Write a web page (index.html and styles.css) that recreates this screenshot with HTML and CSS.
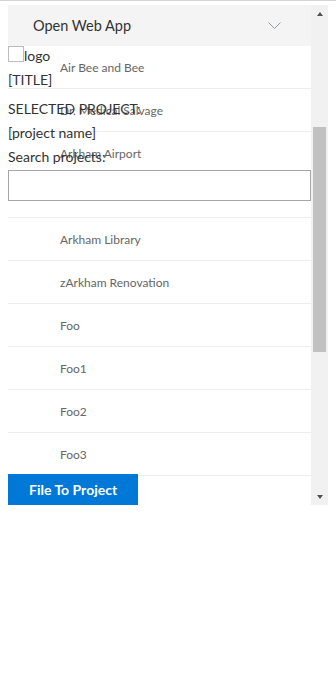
FILE: index.html
```html
<!DOCTYPE html>
<html lang="en">
<head>
    <meta charset="UTF-8">
    <meta name="viewport" content="width=device-width, initial-scale=1.0">
    <title>File To Project</title>
    <link rel="stylesheet" href="styles.css">
</head>
<body>
    <div class="page">
        <div class="pane">
            <div class="pane-content">
                <div class="app-header">
                    <span>Open Web App</span>
                    <svg class="chevron" width="13" height="7" viewBox="0 0 13 7">
                        <polyline points="0.5,0.5 6.5,6.5 12.5,0.5" fill="none" stroke="#8a9ab0" stroke-width="1"/>
                    </svg>
                </div>
                <ul class="project-list">
                    <li>Air Bee and Bee</li>
                    <li>Dr. Medical Salvage</li>
                    <li>Arkham Airport</li>
                    <li></li>
                    <li>Arkham Library</li>
                    <li>zArkham Renovation</li>
                    <li>Foo</li>
                    <li>Foo1</li>
                    <li>Foo2</li>
                    <li>Foo3</li>
                </ul>
            </div>
            <div class="scrollbar">
                <div class="sb-btn"><span class="arrow-up"></span></div>
                <div class="sb-track"><div class="sb-thumb"></div></div>
                <div class="sb-btn"><span class="arrow-down"></span></div>
            </div>
        </div>

        <div class="overlay">
            <div class="line"><span class="broken-img"></span>logo</div>
            <div class="line">[TITLE]</div>
            <div class="line selected">SELECTED PROJECT:</div>
            <div class="line">[project name]</div>
            <label class="line" for="search">Search projects:</label>
            <input id="search" class="search" type="text">
            <button class="file-btn">File To Project</button>
        </div>

        <svg class="cursor" width="13" height="20" viewBox="0 0 13 20">
            <path d="M0.5,0.5 L0.5,16.5 L4.5,12.8 L7.2,19 L9.6,18 L7,11.8 L12,11.8 Z" fill="#fff" stroke="#000" stroke-width="1" stroke-linejoin="miter"/>
        </svg>
    </div>
</body>
</html>
```

FILE: styles.css
```css
body {
    margin: 0;
    padding: 0;
    background-color: #fff;
    border-top: 1px solid #d4d4d4;
    font-family: Lato, "Liberation Sans", sans-serif;
}

.page {
    position: relative;
    padding: 4px 8px 0 8px;
}

/* panel with the project list */
.pane {
    display: flex;
    width: 320px;
    height: 500px;
}

.pane-content {
    flex: 1;
    overflow: hidden;
}

.app-header {
    display: flex;
    align-items: center;
    justify-content: space-between;
    height: 41px;
    padding: 0 30px 0 25px;
    background-color: #f4f4f4;
    color: #333;
    font-size: 14.5px;
}

.chevron {
    display: block;
}

.project-list {
    list-style: none;
    margin: 0;
    padding: 0;
}

.project-list li {
    display: flex;
    align-items: center;
    height: 42px;
    padding-left: 52px;
    border-bottom: 1px solid #eee;
    color: #666;
    font-size: 12px;
}

/* classic scrollbar */
.scrollbar {
    display: flex;
    flex-direction: column;
    width: 17px;
    background-color: #f1f1f1;
}

.sb-btn {
    display: flex;
    align-items: center;
    justify-content: center;
    height: 17px;
}

.arrow-up {
    width: 0;
    height: 0;
    border-left: 3.5px solid transparent;
    border-right: 3.5px solid transparent;
    border-bottom: 4px solid #505050;
}

.arrow-down {
    width: 0;
    height: 0;
    border-left: 3.5px solid transparent;
    border-right: 3.5px solid transparent;
    border-top: 4px solid #505050;
}

.sb-track {
    flex: 1;
}

.sb-thumb {
    height: 225px;
    margin: 105px 2px 0 2px;
    background-color: #c1c1c1;
}

/* page content painted over the list */
.overlay {
    position: absolute;
    top: 43px;
    left: 8px;
    width: 303px;
    height: 461px;
    display: flex;
    flex-direction: column;
    color: #333;
    font-size: 14px;
}

.line {
    display: block;
    line-height: 24px;
}

.selected {
    margin-top: 5px;
}

.broken-img {
    display: inline-block;
    width: 14px;
    height: 14px;
    border: 1px solid #bdbdbd;
    vertical-align: -1px;
}

.search {
    box-sizing: border-box;
    width: 100%;
    height: 31px;
    margin: 1px 0 0 0;
    border: 1px solid #a6a6a6;
    background-color: #fff;
}

.file-btn {
    align-self: flex-start;
    margin-top: auto;
    height: 31px;
    padding: 0 21px;
    border: none;
    background-color: #0078d7;
    color: #fff;
    font-family: Lato, "Liberation Sans", sans-serif;
    font-size: 14px;
    font-weight: bold;
}

.cursor {
    position: absolute;
    left: 107px;
    top: 509px;
}
```
